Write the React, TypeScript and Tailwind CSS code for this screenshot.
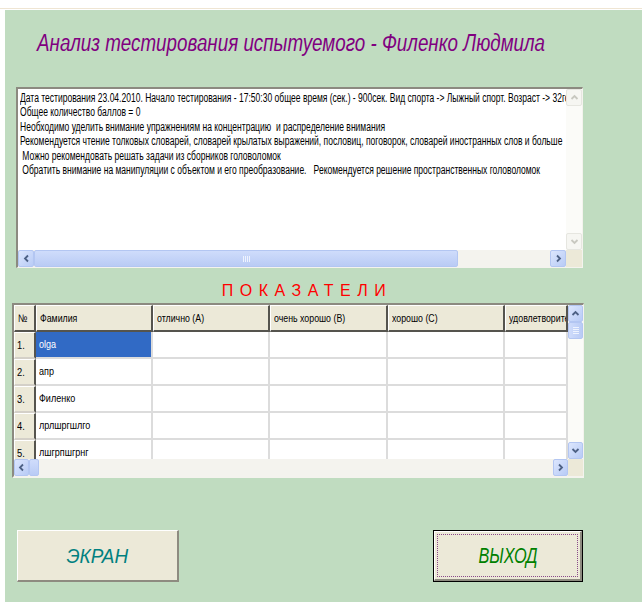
import React from "react";

const memoLines = [
  "Дата тестирования 23.04.2010. Начало тестирования - 17:50:30 общее время (сек.) - 900сек. Вид спорта -> Лыжный спорт. Возраст -> 32года",
  "Общее количество баллов = 0",
  "Необходимо уделить внимание упражнениям на концентрацию  и распределение внимания",
  "Рекомендуется чтение толковых словарей, словарей крылатых выражений, пословиц, поговорок, словарей иностранных слов и больше",
  " Можно рекомендовать решать задачи из сборников головоломок",
  " Обратить внимание на манипуляции с объектом и его преобразование.   Рекомендуется решение пространственных головоломок",
];

const rows = ["olga", "апр", "Филенко", "лрлшргшлго", "лшгрпшгрнг"];

type Dir = "up" | "down" | "left" | "right";

function Chevron({ dir, color }: { dir: Dir; color: string }) {
  const d =
    dir === "up"
      ? "M2.5 7 L5.5 4 L8.5 7"
      : dir === "down"
      ? "M2.5 4 L5.5 7 L8.5 4"
      : dir === "left"
      ? "M7 2.5 L4 5.5 L7 8.5"
      : "M4 2.5 L7 5.5 L4 8.5";
  return (
    <svg width="11" height="11" viewBox="0 0 11 11">
      <path d={d} fill="none" stroke={color} strokeWidth="1.8" />
    </svg>
  );
}

function ArrowButton({ dir, disabled = false, className = "" }: { dir: Dir; disabled?: boolean; className?: string }) {
  return (
    <div
      className={
        "flex items-center justify-center rounded-[2px] border " +
        (disabled
          ? "border-[#e6e6e0] bg-[#f6f6f2] "
          : "border-[#b3c6f2] bg-gradient-to-br from-[#dce6fd] to-[#b8cbf6] ") +
        className
      }
    >
      <Chevron dir={dir} color={disabled ? "#c8c8c0" : "#4d6185"} />
    </div>
  );
}

function Grip({ vertical = false }: { vertical?: boolean }) {
  return (
    <div className={"flex gap-[1px] " + (vertical ? "flex-col" : "flex-row")}>
      {[0, 1, 2, 3].map((i) => (
        <div key={i} className={vertical ? "h-[1px] w-[6px] bg-[#eef3fe]" : "h-[6px] w-[1px] bg-[#eef3fe]"} />
      ))}
    </div>
  );
}

const sans = "font-['Liberation_Sans',Arial,sans-serif]";

function Memo() {
  return (
    <div className="ml-[11px] mt-[32px] flex h-[181px] w-[567px] flex-col border-t-2 border-l-2 border-r border-b border-t-[#8c8a80] border-l-[#8c8a80] border-r-[#f4f3ee] border-b-[#f4f3ee] bg-white">
      <div className="flex min-h-0 flex-1">
        <div className="min-w-0 flex-1 overflow-hidden pl-[2px] pt-[2px]">
          <div className={"origin-top-left scale-x-[0.71] whitespace-pre text-[12px] leading-[14.4px] text-black " + sans}>
            {memoLines.map((l, i) => (
              <div key={i}>{l}</div>
            ))}
          </div>
        </div>
        <div className="flex w-[16px] flex-col justify-between bg-[#fbfbf8]">
          <ArrowButton dir="up" disabled className="h-[17px] w-[16px]" />
          <ArrowButton dir="down" disabled className="h-[17px] w-[16px]" />
        </div>
      </div>
      <div className="flex h-[17px] bg-[#f4f3ee]">
        <ArrowButton dir="left" className="h-[17px] w-[16px]" />
        <div className="flex h-[17px] w-[424px] items-center justify-center rounded-[2px] border border-[#b3c6f2] bg-gradient-to-b from-[#cfdcfb] to-[#b9cbf5]">
          <Grip />
        </div>
        <div className="flex-1" />
        <ArrowButton dir="right" className="h-[17px] w-[16px]" />
        <div className="w-[16px] bg-[#ece9d8]" />
      </div>
    </div>
  );
}

const colWidths = [22, 117, 117, 118, 117, 63];
const headers = ["№", "Фамилия", "отлично  (A)", "очень хорошо (B)", "хорошо  (C)", "удовлетворительно"];

function Grid() {
  return (
    <div className="ml-[7px] mt-[3px] flex h-[175px] w-[572px] flex-col border-t-2 border-l-2 border-r border-b-2 border-t-[#8c8a80] border-l-[#8c8a80] border-r-[#f4f3ee] border-b-[#f4f3ee] bg-white">
      <div className="flex min-h-0 flex-1">
        <div className={"min-w-0 flex-1 overflow-hidden text-[11px] " + sans}>
          <div className="flex h-[27px] bg-[#ece9d8]">
            {headers.map((h, i) => (
              <div
                key={i}
                style={{ width: colWidths[i] }}
                className="flex shrink-0 items-center overflow-hidden whitespace-nowrap border-t border-l border-t-white border-l-white border-r-2 border-b-2 border-r-[#55544e] border-b-[#55544e] pl-[3px] text-black"
              >
                <span className="origin-left scale-x-[0.8]">{h}</span>
              </div>
            ))}
          </div>
          {rows.map((name, r) => (
            <div key={r} className="flex h-[27px]">
              <div
                style={{ width: colWidths[0] }}
                className="flex shrink-0 items-center border-t border-l border-t-white border-l-white border-r-2 border-b-2 border-r-[#55544e] border-b-[#d4d0c8] bg-[#ece9d8] pl-[2px] text-black"
              >
                <span className="origin-left scale-x-[0.85]">{r + 1}.</span>
              </div>
              {colWidths.slice(1).map((w, c) => (
                <div
                  key={c}
                  style={{ width: w }}
                  className={
                    "flex shrink-0 items-center border-r-2 border-b-2 border-r-[#dcdcdc] border-b-[#dcdcdc] pl-[3px] " +
                    (r === 0 && c === 0 ? "bg-[#316ac5] text-white" : "text-black")
                  }
                >
                  {c === 0 ? <span className="origin-left scale-x-[0.82]">{name}</span> : null}
                </div>
              ))}
            </div>
          ))}
        </div>
        <div className="flex w-[15px] flex-col bg-[#fbfbf8]">
          <ArrowButton dir="up" className="h-[17px] w-[15px]" />
          <div className="flex h-[17px] w-[15px] items-center justify-center rounded-[2px] border border-[#b3c6f2] bg-gradient-to-r from-[#cfdcfb] to-[#b9cbf5]">
            <Grip vertical />
          </div>
          <div className="flex-1" />
          <ArrowButton dir="down" className="h-[17px] w-[15px]" />
        </div>
      </div>
      <div className="flex h-[17px] bg-[#f4f3ee]">
        <ArrowButton dir="left" className="h-[17px] w-[15px]" />
        <div className="flex h-[17px] w-[10px] items-center justify-center rounded-[2px] border border-[#b3c6f2] bg-gradient-to-b from-[#cfdcfb] to-[#b9cbf5]" />
        <div className="flex-1" />
        <ArrowButton dir="right" className="h-[17px] w-[15px]" />
        <div className="w-[15px] bg-[#ece9d8]" />
      </div>
    </div>
  );
}

export default function App() {
  return (
    <div className="flex h-[602px] w-[642px] flex-col bg-white">
      <div className="mt-[8px] h-[1px] bg-[#efe5d3]" />
      <div className="ml-[5px] mt-[1px] flex flex-1 flex-col bg-[#c0dcc0]">
        <div className="ml-[32px] mt-[21px] h-[24px]">
          <div className={"origin-left scale-x-[0.8] whitespace-nowrap text-[23.5px] italic leading-[24px] text-[#800080] " + sans}>
            Анализ тестирования испытуемого - Филенко Людмила
          </div>
        </div>
        <Memo />
        <div className={"mt-[14px] flex h-[18px] w-[604px] justify-center whitespace-nowrap text-[16px] leading-[18px] tracking-[6.5px] text-[#ff0000] " + sans}>
          ПОКАЗАТЕЛИ
        </div>
        <Grid />
        <div className="mt-[52px] flex items-start">
          <div className="ml-[12px] flex h-[52px] w-[162px] items-center justify-center border-t border-l border-t-white border-l-white border-r-2 border-b-2 border-r-[#8e8b80] border-b-[#8e8b80] bg-[#ece9d8]">
            <span className={"scale-x-[0.9] text-[21px] italic text-[#008080] " + sans}>ЭКРАН</span>
          </div>
          <div className="ml-[254px] h-[52px] w-[150px] border border-black bg-[#ece9d8]">
            <div className="flex h-full w-full p-[2px] border-t border-l border-t-white border-l-white border-r-2 border-b-2 border-r-[#8e8b80] border-b-[#8e8b80]">
              <div className="flex flex-1 items-center justify-center border border-dotted border-[#8a4a8a]">
                <span className={"scale-x-[0.74] text-[22px] italic text-[#008000] " + sans}>ВЫХОД</span>
              </div>
            </div>
          </div>
        </div>
      </div>
    </div>
  );
}
